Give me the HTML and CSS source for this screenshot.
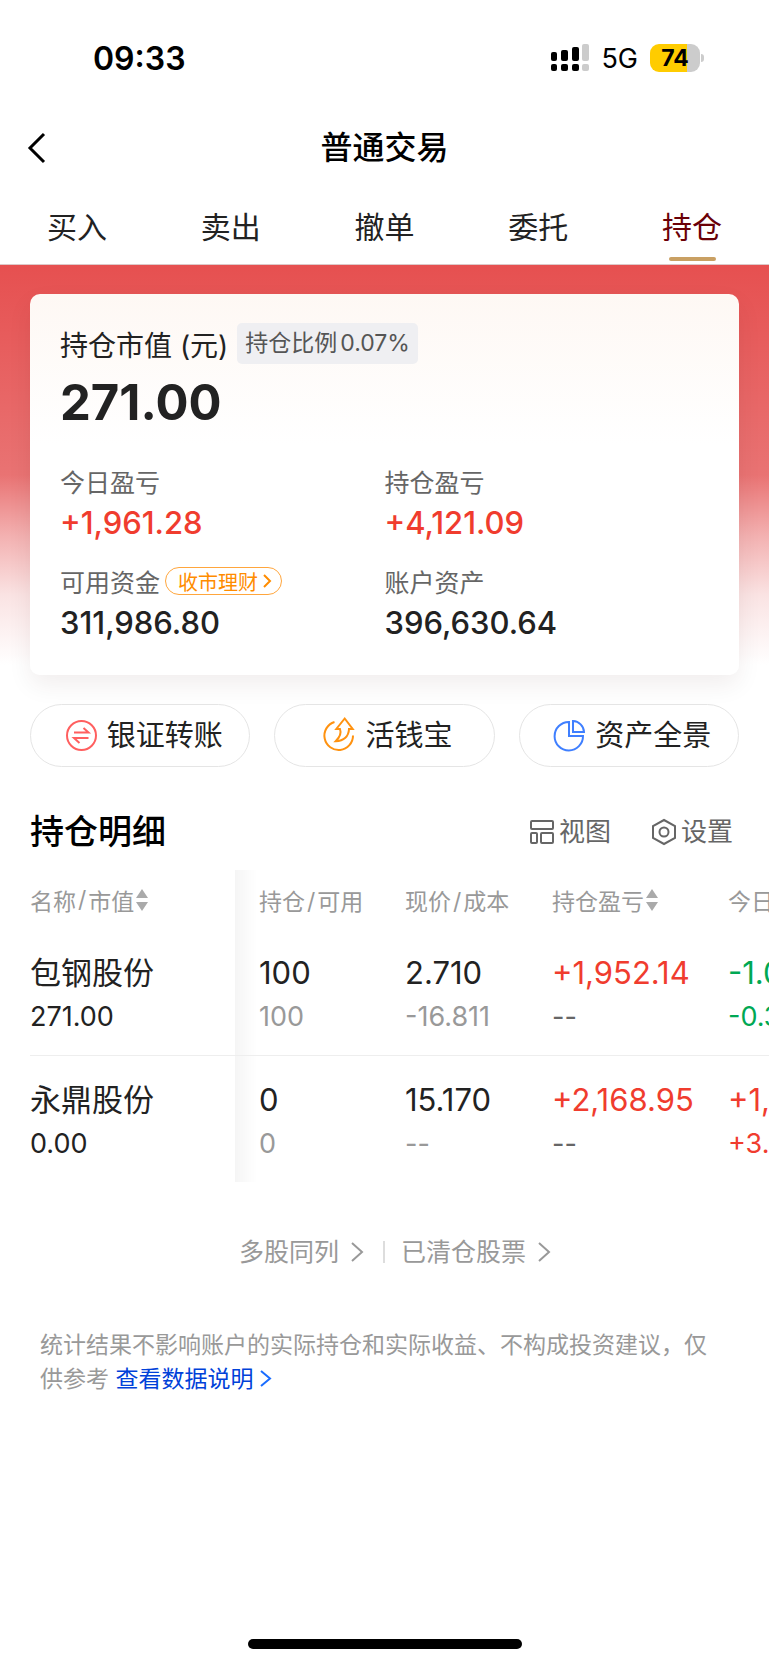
FILE: index.html
```html
<!DOCTYPE html>
<html lang="zh-CN">
<head>
    <meta charset="UTF-8">
    <meta name="viewport" content="width=device-width, initial-scale=1">
    <title>普通交易</title>
    <link rel="stylesheet" href="styles.css">
</head>
<body>
<div class="status">
    <div class="time">09:33</div>
    <div class="status-right">
        <svg class="signal" width="38" height="28" viewBox="0 0 38 28">
            <rect x="0" y="8" width="6" height="9" rx="2"/>
            <rect x="10" y="6" width="7" height="11" rx="2"/>
            <rect x="21" y="3" width="7" height="14" rx="2"/>
            <rect class="off" x="31" y="0" width="7" height="17" rx="2"/>
            <rect x="0" y="20" width="6" height="7" rx="2"/>
            <rect x="10" y="20" width="7" height="7" rx="2"/>
            <rect x="21" y="20" width="7" height="7" rx="2"/>
            <rect class="off" x="31" y="20" width="7" height="7" rx="2"/>
        </svg>
        <span class="net">5G</span>
        <span class="battery">74</span>
    </div>
</div>

<header class="header">
    <a class="back" href="#" aria-label="返回">
        <svg width="18" height="32" viewBox="0 0 18 32"><path d="M16 2 2 16l14 14"/></svg>
    </a>
    <h1>普通交易</h1>
</header>

<nav class="tabs">
    <a href="#">买入</a>
    <a href="#">卖出</a>
    <a href="#">撤单</a>
    <a href="#">委托</a>
    <a class="active" href="#">持仓</a>
</nav>

<main>
    <section class="summary">
        <div class="card">
            <div class="card-head">
                <h2>持仓市值 (元)</h2>
                <div class="ratio"><span>持仓比例</span><span>0.07%</span></div>
            </div>
            <div class="total">271.00</div>
            <div class="stats">
                <div class="stat">
                    <div class="label">今日盈亏</div>
                    <div class="value up">+1,961.28</div>
                </div>
                <div class="stat">
                    <div class="label">持仓盈亏</div>
                    <div class="value up">+4,121.09</div>
                </div>
                <div class="stat">
                    <div class="label">可用资金
                        <button class="pill" type="button">收市理财
                            <svg width="8" height="14" viewBox="0 0 8 14"><path d="m1 1 6 6-6 6"/></svg>
                        </button>
                    </div>
                    <div class="value">311,986.80</div>
                </div>
                <div class="stat">
                    <div class="label">账户资产</div>
                    <div class="value">396,630.64</div>
                </div>
            </div>
        </div>
        <div class="actions">
            <button type="button">
                <svg class="transfer" width="31" height="31" viewBox="0 0 31 31">
                    <circle cx="15.500" cy="15.500" r="14.500"/>
                    <path d="M8 12.500h14.500l-5-4.500M22.500 18H8l5.500 5"/>
                </svg>
                银证转账
            </button>
            <button type="button">
                <svg class="cash" width="31" height="31" viewBox="0 0 31 31">
                    <path d="M10.500 2A14.300 14.300 0 1 0 29 15.500"/>
                    <path d="M20.700-1.500 12.300 9h3.700c1.500 4 0 8-4.300 12.200 8.300 0 13-5 13.300-12.200h3.700z"/>
                </svg>
                活钱宝
            </button>
            <button type="button">
                <svg class="pie" width="31" height="31" viewBox="0 0 31 31">
                    <path d="M15 2A14.200 14.200 0 1 0 29 16H15z"/>
                    <path d="M19 1V12H30A11.500 11.500 0 0 0 19 1z"/>
                </svg>
                资产全景
            </button>
        </div>
    </section>

    <section class="detail">
        <div class="detail-head">
            <h2>持仓明细</h2>
            <button type="button">
                <svg width="26" height="26" viewBox="0 0 26 26">
                    <rect x="2" y="2" width="22" height="8" rx="1"/>
                    <rect x="2" y="14" width="6" height="10" rx="1"/>
                    <rect x="12" y="14" width="12" height="10" rx="1"/>
                </svg>
                视图
            </button>
            <button type="button">
                <svg width="26" height="26" viewBox="0 0 26 26">
                    <path d="M13 1 24 7v12l-11 6L2 19V7z"/>
                    <circle cx="13" cy="13" r="4.500"/>
                </svg>
                设置
            </button>
        </div>
        <div class="table-wrap">
            <table>
                <thead>
                <tr>
                    <th class="name">
                        <button type="button">名称<i>/</i>市值<svg width="12" height="22" viewBox="0 0 12 22"><path d="M6 0l6 9H0zM6 22l6-9H0z"/></svg></button>
                    </th>
                    <th class="hold">持仓<i>/</i>可用</th>
                    <th class="price">现价<i>/</i>成本</th>
                    <th class="profit">
                        <button type="button">持仓盈亏<svg width="12" height="22" viewBox="0 0 12 22"><path d="M6 0l6 9H0zM6 22l6-9H0z"/></svg></button>
                    </th>
                    <th class="today">今日</th>
                </tr>
                </thead>
                <tbody>
                <tr>
                    <td class="name"><div>包钢股份</div><div class="sub">271.00</div></td>
                    <td class="hold"><div>100</div><div class="sub gray">100</div></td>
                    <td><div>2.710</div><div class="sub gray">-16.811</div></td>
                    <td><div class="up">+1,952.14</div><div class="sub dim">--</div></td>
                    <td class="down"><div>-1.0</div><div class="sub">-0.3</div></td>
                </tr>
                <tr>
                    <td class="name"><div>永鼎股份</div><div class="sub">0.00</div></td>
                    <td class="hold"><div>0</div><div class="sub gray">0</div></td>
                    <td><div>15.170</div><div class="sub gray">--</div></td>
                    <td><div class="up">+2,168.95</div><div class="sub dim">--</div></td>
                    <td class="up"><div>+1,</div><div class="sub">+3.</div></td>
                </tr>
                </tbody>
            </table>
        </div>
    </section>

    <div class="links">
        <a href="#">多股同列
            <svg width="12" height="20" viewBox="0 0 12 20"><path d="m1 1 10 9-10 9"/></svg>
        </a>
        <a href="#">已清仓股票
            <svg width="12" height="20" viewBox="0 0 12 20"><path d="m1 1 10 9-10 9"/></svg>
        </a>
    </div>

    <p class="note">统计结果不影响账户的实际持仓和实际收益、不构成投资建议，仅供参考
        <a href="#">查看数据说明 <svg width="11" height="17" viewBox="0 0 11 17"><path d="m1 1 9 7.500-9 7.500"/></svg></a></p>
</main>

<div class="home-bar"></div>
</body>
</html>
```
FILE: styles.css
```css
* {
    box-sizing: border-box;
    margin: 0;
    padding: 0;
}

body {
    display: flex;
    flex-direction: column;
    min-height: 100vh;
    background: #fff;
    color: #222;
    font-family: Inter, "Noto Sans CJK SC", sans-serif;
    overflow-x: hidden;
}

a {
    color: inherit;
    text-decoration: none;
}

button {
    border: 0;
    background: none;
    color: inherit;
    font: inherit;
}

svg {
    flex: none;
    fill: none;
    stroke: currentColor;
    stroke-width: 2;
    overflow: visible;
}

.status {
    display: flex;
    align-items: center;
    justify-content: space-between;
    height: 116px;
    padding: 0 69px 0 93px;
    color: #000;
}

.time {
    font-size: 32px;
    font-weight: 600;
}

.status-right {
    display: flex;
    align-items: center;
    gap: 12px;
}

.signal {
    fill: #000;
    stroke: none;
}

.signal .off {
    fill: #ccc;
}

.net {
    font-size: 27px;
}

.battery {
    position: relative;
    width: 50px;
    height: 28px;
    border-radius: 9px;
    background: linear-gradient(90deg, #fc0 37px, #ccc 37px);
    font-size: 23px;
    font-weight: 700;
    line-height: 28px;
    text-align: center;
}

.battery::after {
    content: "";
    position: absolute;
    left: 51px;
    top: 10px;
    width: 3px;
    height: 8px;
    border-radius: 0 4px 4px 0;
    background: #ccc;
}

.header {
    display: grid;
    grid-template-columns: 1fr auto 1fr;
    align-items: center;
    height: 64px;
    padding: 0 28px;
    color: #000;
}

.header h1 {
    font-size: 32px;
    font-weight: 500;
    line-height: 42px;
}

.back {
    display: flex;
}

.back svg {
    stroke-width: 3;
}

.tabs {
    display: flex;
    height: 85px;
    border-bottom: #ddc8c8 solid 1px;
}

.tabs a {
    display: flex;
    flex: 1;
    flex-direction: column;
    align-items: center;
    justify-content: flex-end;
    gap: 7px;
    font-size: 30px;
    line-height: 46px;
}

.tabs a::after {
    content: "";
    width: 47px;
    height: 4px;
    margin-bottom: 3px;
    border-radius: 2px;
}

.tabs .active {
    color: #6b0007;
}

.tabs .active::after {
    background: #c9a063;
}

.summary {
    padding: 29px 30px 0;
    background: linear-gradient(#e65050, #e97373 210px, #f3b0b0 270px, #fae3e3 330px, #fff 400px);
}

.card {
    padding: 29px 30px 30px;
    border-radius: 10px;
    background: linear-gradient(#fef8f4, #fff 150px);
    box-shadow: 0 10px 24px rgba(60, 0, 20, .07);
}

.card-head {
    display: flex;
    align-items: center;
    gap: 9px;
}

.card-head h2 {
    font-size: 28px;
    font-weight: 400;
}

.ratio {
    display: flex;
    gap: 3px;
    padding: 0 8px;
    border-radius: 5px;
    background: #efeff2;
    color: #555;
    font-size: 23px;
    line-height: 41px;
}

.total {
    margin-bottom: 19px;
    font-size: 49px;
    font-weight: 700;
    line-height: 78px;
}

.stats {
    display: grid;
    grid-template-columns: 1fr 1fr;
    row-gap: 16px;
}

.label {
    display: flex;
    align-items: center;
    gap: 5px;
    height: 40px;
    color: #666;
    font-size: 25px;
}

.value {
    font-size: 31px;
    font-weight: 500;
    line-height: 44px;
}

.up {
    color: #f03c2e;
}

.down {
    color: #00a854;
}

.pill {
    display: flex;
    align-items: center;
    gap: 5px;
    height: 28px;
    padding: 0 10px 0 12px;
    border: #ffa63d solid 1px;
    border-radius: 14px;
    color: #ff8c00;
    font-size: 20px;
}

.actions {
    display: grid;
    grid-template-columns: repeat(3, 1fr);
    gap: 24px;
    margin-top: 29px;
}

.actions button {
    display: flex;
    align-items: center;
    justify-content: center;
    gap: 10px;
    height: 63px;
    padding-left: 8px;
    border: #e5e5e5 solid 1px;
    border-radius: 32px;
    background: #fff;
    font-size: 29px;
    line-height: 42px;
}

.transfer {
    stroke: #ff5f5f;
}

.cash {
    stroke: #ff9210;
}

.pie {
    stroke: #3f7fff;
}

.detail-head {
    display: flex;
    align-items: center;
    gap: 40px;
    height: 103px;
    padding: 26px 36px 0 30px;
}

.detail-head h2 {
    flex: 1;
    color: #000;
    font-size: 34px;
    font-weight: 500;
    line-height: 50px;
}

.detail-head button {
    display: flex;
    align-items: center;
    gap: 4px;
    color: #666;
    font-size: 26px;
    line-height: 38px;
}

.table-wrap {
    padding-left: 30px;
    overflow: hidden;
}

table {
    width: 879px;
    table-layout: fixed;
    border-spacing: 0;
    text-align: left;
}

th {
    height: 59px;
    color: #999;
    font-size: 23px;
    font-weight: 400;
    white-space: nowrap;
}

th i {
    margin: 0 2px;
    font-style: normal;
}

th button {
    display: flex;
    align-items: center;
}

th svg {
    margin-left: 2px;
    fill: #aaa;
    stroke: none;
}

td {
    padding: 22px 0 16px;
    font-size: 31px;
    line-height: 44px;
}

tbody tr:first-child td {
    border-bottom: #eee solid 1px;
}

/* fixed first column */
.name {
    position: sticky;
    left: 0;
    width: 205px;
    background: #fff;
}

.name::after {
    content: "";
    position: absolute;
    left: 100%;
    top: 0;
    bottom: 0;
    width: 22px;
    background: linear-gradient(90deg, rgba(0, 0, 0, .04), transparent);
}

.hold {
    width: 170px;
    padding-left: 24px;
}

.price {
    width: 147px;
}

.profit {
    width: 176px;
}

.sub {
    font-size: 27px;
}

.gray {
    color: #999;
}

.dim {
    color: #666;
}

.links {
    display: flex;
    justify-content: center;
    margin-top: 50px;
    padding-left: 20px;
    color: #999;
    font-size: 25px;
    line-height: 40px;
}

.links a {
    display: flex;
    align-items: center;
    gap: 12px;
}

.links a + a::before {
    content: "";
    width: 2px;
    height: 22px;
    margin: 0 4px 0 20px;
    background: #ddd;
}

.note {
    margin-top: 56px;
    padding: 0 40px;
    color: #999;
    font-size: 23px;
    line-height: 34px;
}

.note a {
    color: #0041d9;
}

.note svg {
    stroke: #1a6dff;
}

.home-bar {
    width: 274px;
    height: 10px;
    margin: auto auto 16px;
    border-radius: 5px;
    background: #000;
}
```
